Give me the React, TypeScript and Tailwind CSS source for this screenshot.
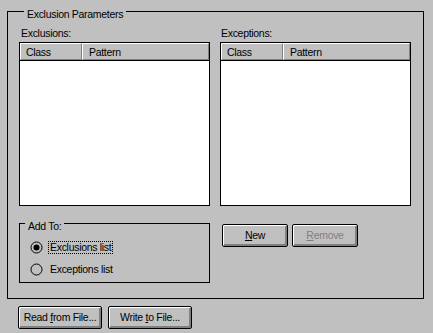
import React from 'react';

const font = { fontFamily: '"Liberation Sans", Arial, sans-serif' };

const GroupTitle: React.FC<{ children: React.ReactNode }> = ({ children }) => (
  <div className="-mt-[4px] ml-[5px] w-fit px-[3px] bg-[#c0c0c0] leading-[13px]">{children}</div>
);

const HeaderCell: React.FC<{ className: string; children: React.ReactNode }> = ({ className, children }) => (
  <div
    className={`h-[17px] bg-[#c0c0c0] border-t border-l border-white border-b border-r border-b-[#808080] border-r-[#808080] pt-[2px] leading-[13px] ${className}`}
  >
    {children}
  </div>
);

const ListBox: React.FC = () => (
  <div className="h-[164px] border border-black bg-white flex flex-col">
    <div className="flex border-b border-black">
      <HeaderCell className="w-[62px] pl-[5px]">Class</HeaderCell>
      <HeaderCell className="flex-1 pl-[6px]">Pattern</HeaderCell>
    </div>
  </div>
);

const Button: React.FC<{ width: string; disabled?: boolean; children: React.ReactNode }> = ({
  width,
  disabled,
  children,
}) => (
  <div
    className={`h-[23px] ${width} rounded-[2px] border border-black bg-[#c0c0c0] shadow-[inset_1px_1px_0_#ffffff,inset_-2px_-2px_0_#808080] flex items-center justify-center leading-[13px] ${
      disabled ? 'text-[#808080]' : 'text-black'
    }`}
  >
    <span className="-mt-[1px]">{children}</span>
  </div>
);

const Radio: React.FC<{ checked?: boolean }> = ({ checked }) => (
  <svg width="13" height="13" viewBox="0 0 13 13" className="shrink-0">
    <circle cx="6.5" cy="6.5" r="5.5" fill="none" stroke="#000" strokeWidth="1" />
    {checked && <circle cx="6.5" cy="6.5" r="3" fill="#000" />}
  </svg>
);

const App: React.FC = () => {
  return (
    <div
      className="w-[433px] h-[333px] bg-[#c0c0c0] text-black text-[10.5px] tracking-[-0.3px] pt-[11px] pl-[7px] overflow-hidden"
      style={font}
    >
      <div className="w-[417px] border border-black pl-[11px] pr-[12px] pb-[15px]">
        <GroupTitle>Exclusion Parameters</GroupTitle>
        <div className="flex gap-[10px] mt-[6px]">
          <div className="w-[191px] flex flex-col">
            <div className="pl-[2px] leading-[13px]">Exclusions:</div>
            <div className="mt-[2px]">
              <ListBox />
            </div>
            <div className="mt-[17px] border border-black pb-[5px]">
              <GroupTitle>Add To:</GroupTitle>
              <div className="mt-[6px] h-[16px] flex items-center pl-[10px]">
                <Radio checked />
                <span className="ml-[5px] border border-dotted border-black px-[1px] leading-[11px]">
                  Exclusions list
                </span>
              </div>
              <div className="mt-[6px] h-[16px] flex items-center pl-[10px]">
                <Radio />
                <span className="ml-[5px] border border-transparent px-[1px] leading-[11px]">
                  Exceptions list
                </span>
              </div>
            </div>
          </div>
          <div className="w-[191px] flex flex-col">
            <div className="pl-[1px] leading-[13px]">Exceptions:</div>
            <div className="mt-[2px]">
              <ListBox />
            </div>
            <div className="mt-[18px] ml-[2px] flex gap-[4px]">
              <Button width="w-[66px]">
                <u>N</u>ew
              </Button>
              <Button width="w-[66px]" disabled>
                <u>R</u>emove
              </Button>
            </div>
          </div>
        </div>
      </div>
      <div className="mt-[7px] ml-[11px] flex gap-[6px]">
        <Button width="w-[84px]">
          Read <u>f</u>rom File...
        </Button>
        <Button width="w-[84px]">
          Write <u>t</u>o File...
        </Button>
      </div>
    </div>
  );
};

export default App;
